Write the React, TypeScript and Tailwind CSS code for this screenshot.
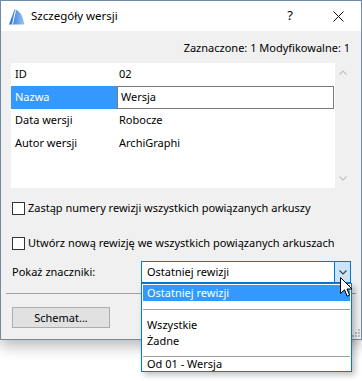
import React from "react";

const rows = [
  { label: "ID", value: "02" },
  { label: "Nazwa", value: "Wersja", selected: true },
  { label: "Data wersji", value: "Robocze" },
  { label: "Autor wersji", value: "ArchiGraphi" },
];

const AppIcon = () => (
  <svg width="16" height="16" viewBox="0 0 16 16">
    <defs>
      <linearGradient id="g1" x1="0" y1="0" x2="1" y2="0">
        <stop offset="0" stopColor="#1f6fd6" />
        <stop offset="1" stopColor="#9cc8f6" />
      </linearGradient>
    </defs>
    <path d="M0 15.5 L5.5 0.5 Q13 1.5 15.5 15.5 Z" fill="url(#g1)" />
    <path d="M6.5 1.5 L3.5 15.5" stroke="#ffffff" strokeWidth="1" />
  </svg>
);

const Checkbox = () => (
  <div className="w-[13px] h-[13px] border border-[#333333] bg-white shrink-0" />
);

const Chevron = ({ up, color }: { up?: boolean; color: string }) => (
  <svg width="8" height="5" viewBox="0 0 8 5">
    <path
      d={up ? "M0.5 4.5 L4 1 L7.5 4.5" : "M0.5 0.5 L4 4 L7.5 0.5"}
      stroke={color}
      strokeWidth="1.2"
      fill="none"
    />
  </svg>
);

export default function App() {
  return (
    <div className="relative w-[362px] h-[381px] bg-white font-['Noto_Sans',sans-serif] text-[11px] text-black overflow-hidden whitespace-nowrap">
      {/* Dialog window */}
      <div className="w-[362px] h-[340px] border border-[#6f8ca6] bg-[#f0f0f0] shadow-[0_6px_14px_rgba(0,0,0,0.28)] flex flex-col">
        {/* Title bar */}
        <div className="h-[30px] bg-white flex items-center shrink-0">
          <div className="ml-[8px] mt-[1px]">
            <AppIcon />
          </div>
          <span className="ml-[6px] text-[11.5px]">Szczegóły wersji</span>
          <span className="ml-auto mr-[40px] text-[13px]">?</span>
          <svg width="11" height="11" viewBox="0 0 11 11" className="mr-[17px]">
            <path d="M0.5 0.5 L10.5 10.5 M10.5 0.5 L0.5 10.5" stroke="#111" strokeWidth="1" />
          </svg>
        </div>

        {/* Body */}
        <div className="flex flex-col px-[10px]">
          <div className="h-[32px] pt-[9px] leading-[16px] text-right pr-[1px]">
            Zaznaczone: 1 Modyfikowalne: 1
          </div>

          {/* Property list */}
          <div className="h-[125px] flex">
            <div className="w-[324px] bg-white flex flex-col">
              {rows.map((r) => (
                <div key={r.label} className="h-[23px] flex items-stretch">
                  <div
                    className={
                      r.selected
                        ? "w-[106px] bg-[#3399ff] text-white pl-[4px] flex items-center"
                        : "w-[106px] pl-[4px] flex items-center"
                    }
                  >
                    {r.label}
                  </div>
                  {r.selected ? (
                    <div className="w-[217px] border border-[#7a7a7a] pl-[3px] flex items-center">
                      {r.value}
                    </div>
                  ) : (
                    <div className="flex-1 pl-[2px] flex items-center">{r.value}</div>
                  )}
                </div>
              ))}
            </div>
            <div className="w-[16px] flex flex-col items-center justify-between py-[7px]">
              <Chevron up color="#c2c2c2" />
              <Chevron color="#c2c2c2" />
            </div>
          </div>

          <label className="mt-[12px] h-[16px] flex items-center gap-[3px] pl-[1px]">
            <Checkbox />
            <span>Zastąp numery rewizji wszystkich powiązanych arkuszy</span>
          </label>
          <label className="mt-[19px] h-[16px] flex items-center gap-[3px] pl-[1px]">
            <Checkbox />
            <span>Utwórz nową rewizję we wszystkich powiązanych arkuszach</span>
          </label>

          {/* Show markers */}
          <div className="mt-[10px] h-[22px] flex items-center">
            <span className="w-[130px] pl-[1px]">Pokaż znaczniki:</span>
            <div className="w-[210px] h-[22px] border border-[#0078d7] bg-white flex">
              <div className="flex-1 pl-[5px] flex items-center">Ostatniej rewizji</div>
              <div className="w-[16px] bg-[#cce4f7] border-l border-[#0078d7] flex items-center justify-center">
                <Chevron color="#444444" />
              </div>
            </div>
          </div>

          <div className="mt-[10px] h-px bg-[#a0a0a0] -ml-[5px] mr-[-5px]" />

          <button className="mt-[13px] w-[98px] h-[21px] ml-[1px] bg-[#e1e1e1] border border-[#adadad] leading-none">
            Schemat...
          </button>
        </div>
      </div>

      {/* Resize grip */}
      <svg className="absolute left-[352px] top-[329px]" width="8" height="8" viewBox="0 0 8 8">
        <rect x="6" y="0" width="2" height="2" fill="#bdbdbd" />
        <rect x="3" y="3" width="2" height="2" fill="#bdbdbd" />
        <rect x="6" y="3" width="2" height="2" fill="#bdbdbd" />
        <rect x="0" y="6" width="2" height="2" fill="#bdbdbd" />
        <rect x="3" y="6" width="2" height="2" fill="#bdbdbd" />
        <rect x="6" y="6" width="2" height="2" fill="#bdbdbd" />
      </svg>

      {/* Open dropdown list */}
      <div className="absolute left-[141px] top-[283px] w-[211px] h-[89px] bg-white border border-[#0078d7] shadow-[3px_3px_6px_rgba(0,0,0,0.25)] flex flex-col overflow-hidden">
        <div className="h-[16px] shrink-0 mx-px mt-px bg-[#3399ff] text-white pl-[4px] flex items-center">
          Ostatniej rewizji
        </div>
        <div className="h-[9px] shrink-0 flex items-end px-[1px]">
          <div className="h-px w-full bg-[#a0a0a0]" />
        </div>
        <div className="h-[7px] shrink-0" />
        <div className="h-[16px] shrink-0 pl-[5px] flex items-center">Wszystkie</div>
        <div className="h-[16px] shrink-0 pl-[5px] flex items-center">Żadne</div>
        <div className="h-[8px] shrink-0 flex items-end px-[1px]">
          <div className="h-px w-full bg-[#a0a0a0]" />
        </div>
        <div className="h-[15px] shrink-0 pl-[5px] flex items-end">Od 01 - Wersja</div>
      </div>

      {/* Mouse cursor */}
      <svg className="absolute left-[340px] top-[277px]" width="13" height="21" viewBox="0 0 13 21">
        <path
          d="M0.5 0.5 L0.5 16.5 L4.5 12.8 L7.2 19.2 L9.6 18.2 L7 12 L12 12 Z"
          fill="#ffffff"
          stroke="#000000"
          strokeWidth="1"
          strokeLinejoin="miter"
        />
      </svg>
    </div>
  );
}
